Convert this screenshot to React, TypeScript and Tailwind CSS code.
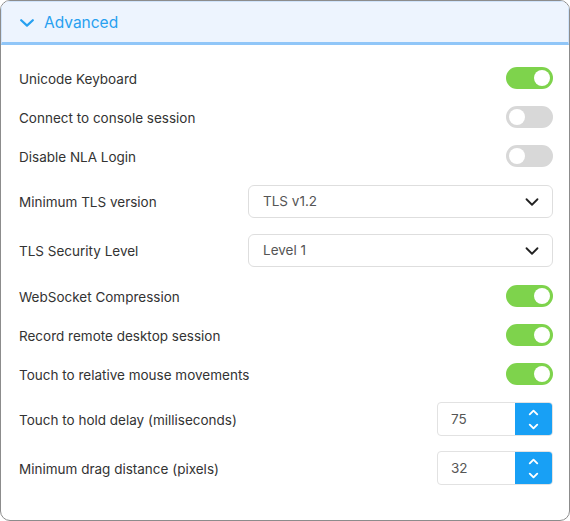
import React from 'react';
import { ChevronDown, ChevronUp } from 'lucide-react';

type ToggleProps = { on: boolean };

function Toggle({ on }: ToggleProps) {
  return (
    <div
      className={
        'flex h-[22px] w-[47px] items-center rounded-full px-[3px] ' +
        (on ? 'justify-end bg-[#7ed34c]' : 'justify-start bg-[#d8d8d8]')
      }
    >
      <div className="h-[16px] w-[16px] rounded-full bg-white" />
    </div>
  );
}

function Select({ value }: { value: string }) {
  return (
    <div className="flex h-[33px] w-[305px] items-center justify-between rounded-[6px] border border-[#dedede] bg-white pl-[14px] pr-[9px] text-[13.5px] text-[#555]">
      <span>{value}</span>
      <ChevronDown className="h-[22px] w-[22px] text-[#222]" strokeWidth={2} />
    </div>
  );
}

function NumberField({ value }: { value: number }) {
  return (
    <div className="flex h-[34px] w-[116px] overflow-hidden rounded-[4px] border border-[#e2e2e2] bg-white">
      <div className="flex flex-1 items-center pl-[13px] text-[13.5px] text-[#555]">{value}</div>
      <div className="flex w-[37px] flex-col items-center justify-center bg-[#18a0f5] text-white">
        <ChevronUp className="-mb-[1px] h-[15px] w-[15px]" strokeWidth={3} />
        <ChevronDown className="h-[15px] w-[15px]" strokeWidth={3} />
      </div>
    </div>
  );
}

const rows = [
  { label: 'Unicode Keyboard', control: <Toggle on />, mt: 'mt-0' },
  { label: 'Connect to console session', control: <Toggle on={false} />, mt: 'mt-[17px]' },
  { label: 'Disable NLA Login', control: <Toggle on={false} />, mt: 'mt-[17px]' },
  { label: 'Minimum TLS version', control: <Select value="TLS v1.2" />, mt: 'mt-[18px]' },
  { label: 'TLS Security Level', control: <Select value="Level 1" />, mt: 'mt-[16px]' },
  { label: 'WebSocket Compression', control: <Toggle on />, mt: 'mt-[18px]' },
  { label: 'Record remote desktop session', control: <Toggle on />, mt: 'mt-[17px]' },
  { label: 'Touch to relative mouse movements', control: <Toggle on />, mt: 'mt-[17px]' },
  { label: 'Touch to hold delay (milliseconds)', control: <NumberField value={75} />, mt: 'mt-[17px]' },
  { label: 'Minimum drag distance (pixels)', control: <NumberField value={32} />, mt: 'mt-[15px]' },
];

export default function App() {
  return (
    <div className="h-[521px] w-[570px] bg-white font-['Inter',sans-serif]">
      <div className="h-[521px] w-[570px] overflow-hidden rounded-[10px] border border-[#8c8c8c]">
        <div className="flex h-[44px] items-center gap-[10px] border-x border-t border-b-[3px] border-[#cfe3fb] border-b-[#90c6f8] bg-[#edf4fe] pl-[18px]">
          <svg width="14" height="8" viewBox="0 0 14 8" className="mt-[1px]">
            <path d="M1.2 1.2 L7 6.6 L12.8 1.2" fill="none" stroke="#27a0f0" strokeWidth="2.2" strokeLinecap="round" strokeLinejoin="round" />
          </svg>
          <span className="mt-[1px] text-[15.5px] text-[#27a0f0]">Advanced</span>
        </div>

        <div className="flex flex-col pl-[18px] pr-[16px] pt-[22px]">
          {rows.map((row) => (
            <div key={row.label} className={'flex items-center justify-between ' + row.mt}>
              <span className="translate-y-[1px] text-[13.5px] text-[#333]">{row.label}</span>
              {row.control}
            </div>
          ))}
        </div>
      </div>
    </div>
  );
}
